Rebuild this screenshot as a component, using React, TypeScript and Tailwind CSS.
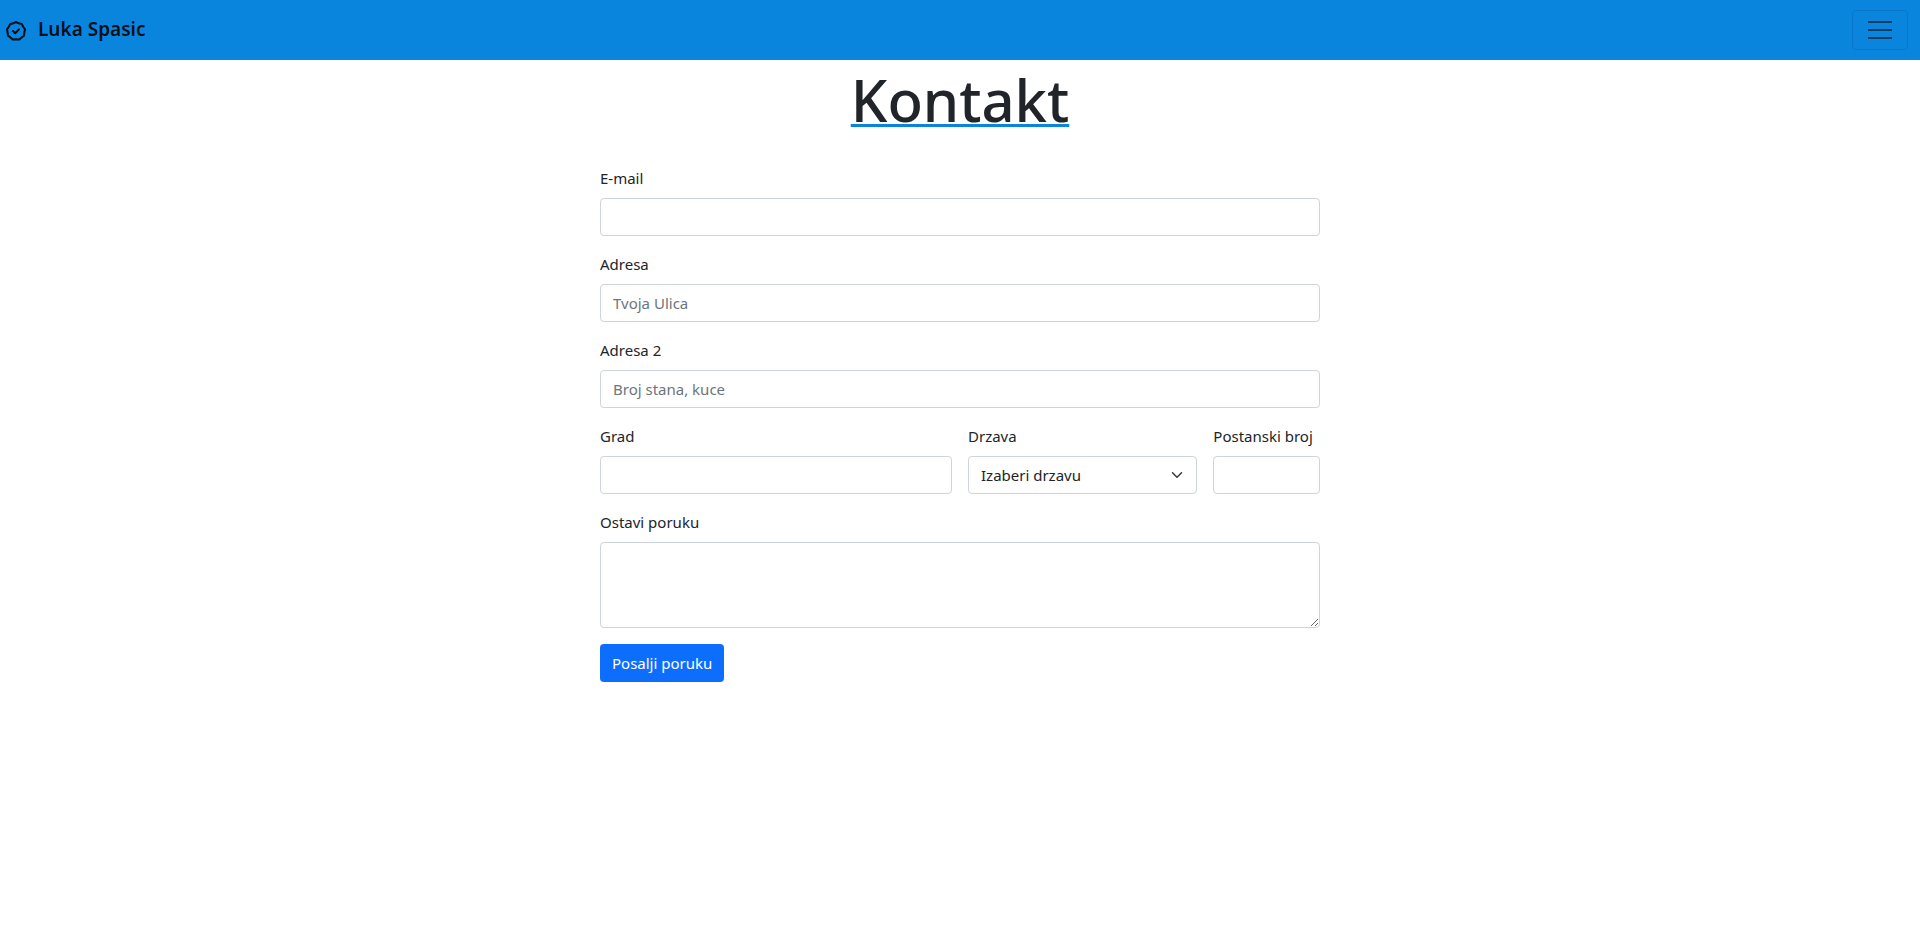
import type { ReactNode } from "react";

const control =
  "block w-full rounded border border-[#ced4da] bg-white px-3 text-[#212529] placeholder:text-[#6c757d] focus:border-[#86b7fe] focus:outline-none";

function Field({ id, label, className, children }: { id: string; label: string; className: string; children: ReactNode }) {
  return (
    <div className={className}>
      <label htmlFor={id} className="mb-2 block whitespace-nowrap">
        {label}
      </label>
      {children}
    </div>
  );
}

function BadgeCheck() {
  return (
    <svg className="mt-1 size-5" viewBox="0 0 20 20" fill="none" stroke="currentColor" strokeWidth="2" strokeLinejoin="round" strokeLinecap="round" aria-hidden="true">
      <path d="M10 1 L12.7 2.3 L15.8 3 L17.2 5.8 L19 8.4 L18.4 11.4 L18 14.6 L15.6 16.5 L13.3 18.5 L10 18.3 L6.7 18.5 L4.4 16.5 L2 14.6 L1.6 11.4 L1 8.4 L2.8 5.8 L4.2 3 L7.3 2.3 Z" />
      <path d="M7 10 L9.2 12.2 L13 8.4" />
    </svg>
  );
}

export default function App() {
  return (
    <div className="min-h-screen bg-white font-['Noto_Sans','Open_Sans',sans-serif] text-[15px] leading-6 text-[#212529]">
      <nav className="flex h-15 items-center justify-between bg-[#0a85de] pr-3 pl-1.5">
        <a href="#" className="flex items-center gap-3 pb-0.5 text-[19px] font-semibold text-black/90">
          <BadgeCheck />
          Luka Spasic
        </a>
        <button type="button" aria-label="Meni" className="flex h-10 w-14 items-center justify-center rounded border border-black/10 text-black/55">
          <svg className="size-[30px]" viewBox="0 0 30 30" stroke="currentColor" strokeWidth="2" strokeMiterlimit="10" aria-hidden="true">
            <path d="M3 7h24M3 15h24M3 23h24" />
          </svg>
        </button>
      </nav>
      <main className="mx-auto max-w-[720px] pb-8">
        <h1 className="pt-1 text-center text-[58px] leading-[72px] font-medium underline decoration-[#0a85de] decoration-3 underline-offset-2 [text-decoration-skip-ink:none]">
          Kontakt
        </h1>
        <form className="mt-[30px] grid grid-cols-12 gap-4" onSubmit={(e) => e.preventDefault()}>
          <Field id="email" label="E-mail" className="col-span-12">
            <input id="email" type="email" className={`${control} h-[38px]`} />
          </Field>
          <Field id="adresa" label="Adresa" className="col-span-12">
            <input id="adresa" type="text" placeholder="Tvoja Ulica" className={`${control} h-[38px]`} />
          </Field>
          <Field id="adresa2" label="Adresa 2" className="col-span-12">
            <input id="adresa2" type="text" placeholder="Broj stana, kuce" className={`${control} h-[38px]`} />
          </Field>
          <Field id="grad" label="Grad" className="col-span-6">
            <input id="grad" type="text" className={`${control} h-[38px]`} />
          </Field>
          <Field id="drzava" label="Drzava" className="col-span-4">
            <div className="relative">
              <select id="drzava" className={`${control} h-[38px] appearance-none pr-9`}>
                <option>Izaberi drzavu</option>
              </select>
              <svg className="pointer-events-none absolute top-[13px] right-3 h-3 w-4" viewBox="0 0 16 16" fill="none" stroke="#343a40" strokeWidth="2" strokeLinecap="round" strokeLinejoin="round" aria-hidden="true">
                <path d="m2 5 6 6 6-6" />
              </svg>
            </div>
          </Field>
          <Field id="postanski" label="Postanski broj" className="col-span-2">
            <input id="postanski" type="text" className={`${control} h-[38px]`} />
          </Field>
          <Field id="poruka" label="Ostavi poruku" className="col-span-12">
            <textarea id="poruka" rows={3} className={`${control} py-1.5`} />
          </Field>
          <div className="col-span-12">
            <button type="submit" className="h-[38px] rounded bg-[#0d6efd] px-3 text-white">
              Posalji poruku
            </button>
          </div>
        </form>
      </main>
    </div>
  );
}
